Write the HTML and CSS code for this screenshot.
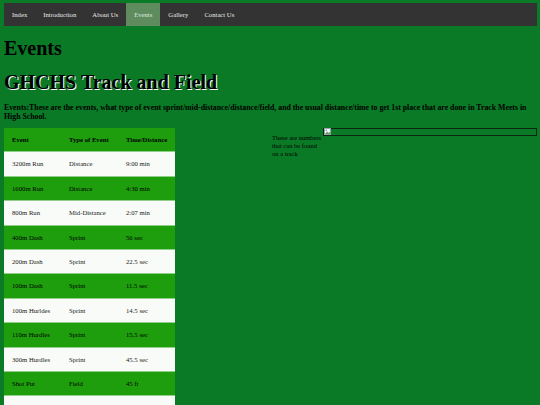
FILE: index.html
```
<!DOCTYPE html>
<html>
<head>
<meta charset="utf-8">
<title>Events</title>
<link rel="stylesheet" href="styles.css">
</head>
<body>
<ul class="nav">
  <li><a href="#">Index</a></li>
  <li><a href="#">Introduction</a></li>
  <li><a href="#">About Us</a></li>
  <li class="active"><a href="#">Events</a></li>
  <li><a href="#">Gallery</a></li>
  <li><a href="#">Contact Us</a></li>
</ul>
<h1 class="title">Events</h1>
<h1 class="shadow">GHCHS Track and Field</h1>
<p class="intro">Events:These are the events, what type of event sprint/mid-distance/distance/field, and the usual distance/time to get 1st place that are done in Track Meets in High School.</p>
<div class="content">
  <table class="events">
    <tr><th>Event</th><th>Type of Event</th><th>Time/Distance</th></tr>
    <tr><td>3200m Run</td><td>Distance</td><td>9:00 min</td></tr>
    <tr><td>1600m Run</td><td>Distance</td><td>4:30 min</td></tr>
    <tr><td>800m Run</td><td>Mid-Distance</td><td>2:07 min</td></tr>
    <tr><td>400m Dash</td><td>Sprint</td><td>56 sec</td></tr>
    <tr><td>200m Dash</td><td>Sprint</td><td>22.5 sec</td></tr>
    <tr><td>100m Dash</td><td>Sprint</td><td>11.5 sec</td></tr>
    <tr><td>100m Hurldes</td><td>Sprint</td><td>14.5 sec</td></tr>
    <tr><td>110m Hurdles</td><td>Sprint</td><td>15.5 sec</td></tr>
    <tr><td>300m Hurdles</td><td>Sprint</td><td>45.5 sec</td></tr>
    <tr><td>Shot Put</td><td>Field</td><td>45 ft</td></tr>
    <tr class="blank"><td></td><td></td><td></td></tr>
  </table>
  <div class="aside">
    <p class="caption">These are numbers that can be found on a track</p>
    <div class="picture">
      <svg class="broken" width="8" height="8" viewBox="0 0 8 8">
        <rect x="0.5" y="0.5" width="6" height="6" fill="#f4f6f8" stroke="#9aa3ad" stroke-width="1"/>
        <path d="M1 6 L3 3.5 L4.5 5 L6 3.8 L6.5 6 Z" fill="#5fa04f"/>
        <circle cx="2.3" cy="2.2" r="0.8" fill="#6aa0d8"/>
      </svg>
    </div>
  </div>
</div>
</body>
</html>
```
FILE: styles.css
```
html, body {
  background: #0b7a26;
}
body {
  margin: 3px 3px 0 4px;
  font-family: "Liberation Serif", "Times New Roman", serif;
  color: #000;
}
.nav {
  list-style: none;
  margin: 0;
  padding: 0;
  display: flex;
  background: #333333;
  height: 23px;
}
.nav li {
  display: flex;
}
.nav a {
  display: block;
  padding: 0 8px;
  line-height: 23px;
  font-size: 6.7px;
  color: #e8e8e8;
  text-decoration: none;
}
.nav .active a {
  background: #5e8c5f;
  color: #dfe8df;
}
.title {
  font-size: 20px;
  margin: 11px 0 0 0;
  line-height: 23px;
}
.shadow {
  font-size: 20px;
  margin: 11px 0 0 0;
  line-height: 23px;
  text-shadow: 1px 1px 0 #ffffff;
}
.intro {
  font-size: 7.8px;
  font-weight: bold;
  line-height: 9px;
  margin: 9px 0 0 0;
}
.content {
  display: flex;
  align-items: flex-start;
  margin-top: 7px;
}
.events {
  width: 171px;
  border-collapse: collapse;
  table-layout: fixed;
  flex: none;
}
.events th, .events td {
  text-align: left;
  font-size: 6.7px;
  line-height: 8px;
  padding: 8px 8px 7.4px 8px;
  border-bottom: 1px solid #8fcf8a;
}
.events .blank td {
  height: 8px;
}
.events th {
  font-weight: bold;
}
.events tr:nth-child(odd) {
  background: #1e9e0d;
}
.events tr:nth-child(even) {
  background: #f8fbf8;
  color: #222;
}
.aside {
  display: flex;
  align-items: flex-start;
  margin-left: 97px;
  flex: 1;
}
.caption {
  width: 51px;
  flex: none;
  font-size: 6.5px;
  line-height: 8px;
  margin: 6px 0 0 0;
}
.picture {
  flex: 1;
  height: 6px;
  border: 1.5px solid #0d2612;
  position: relative;
}
.broken {
  display: block;
  position: absolute;
  left: 0;
  top: -1px;
}
```
